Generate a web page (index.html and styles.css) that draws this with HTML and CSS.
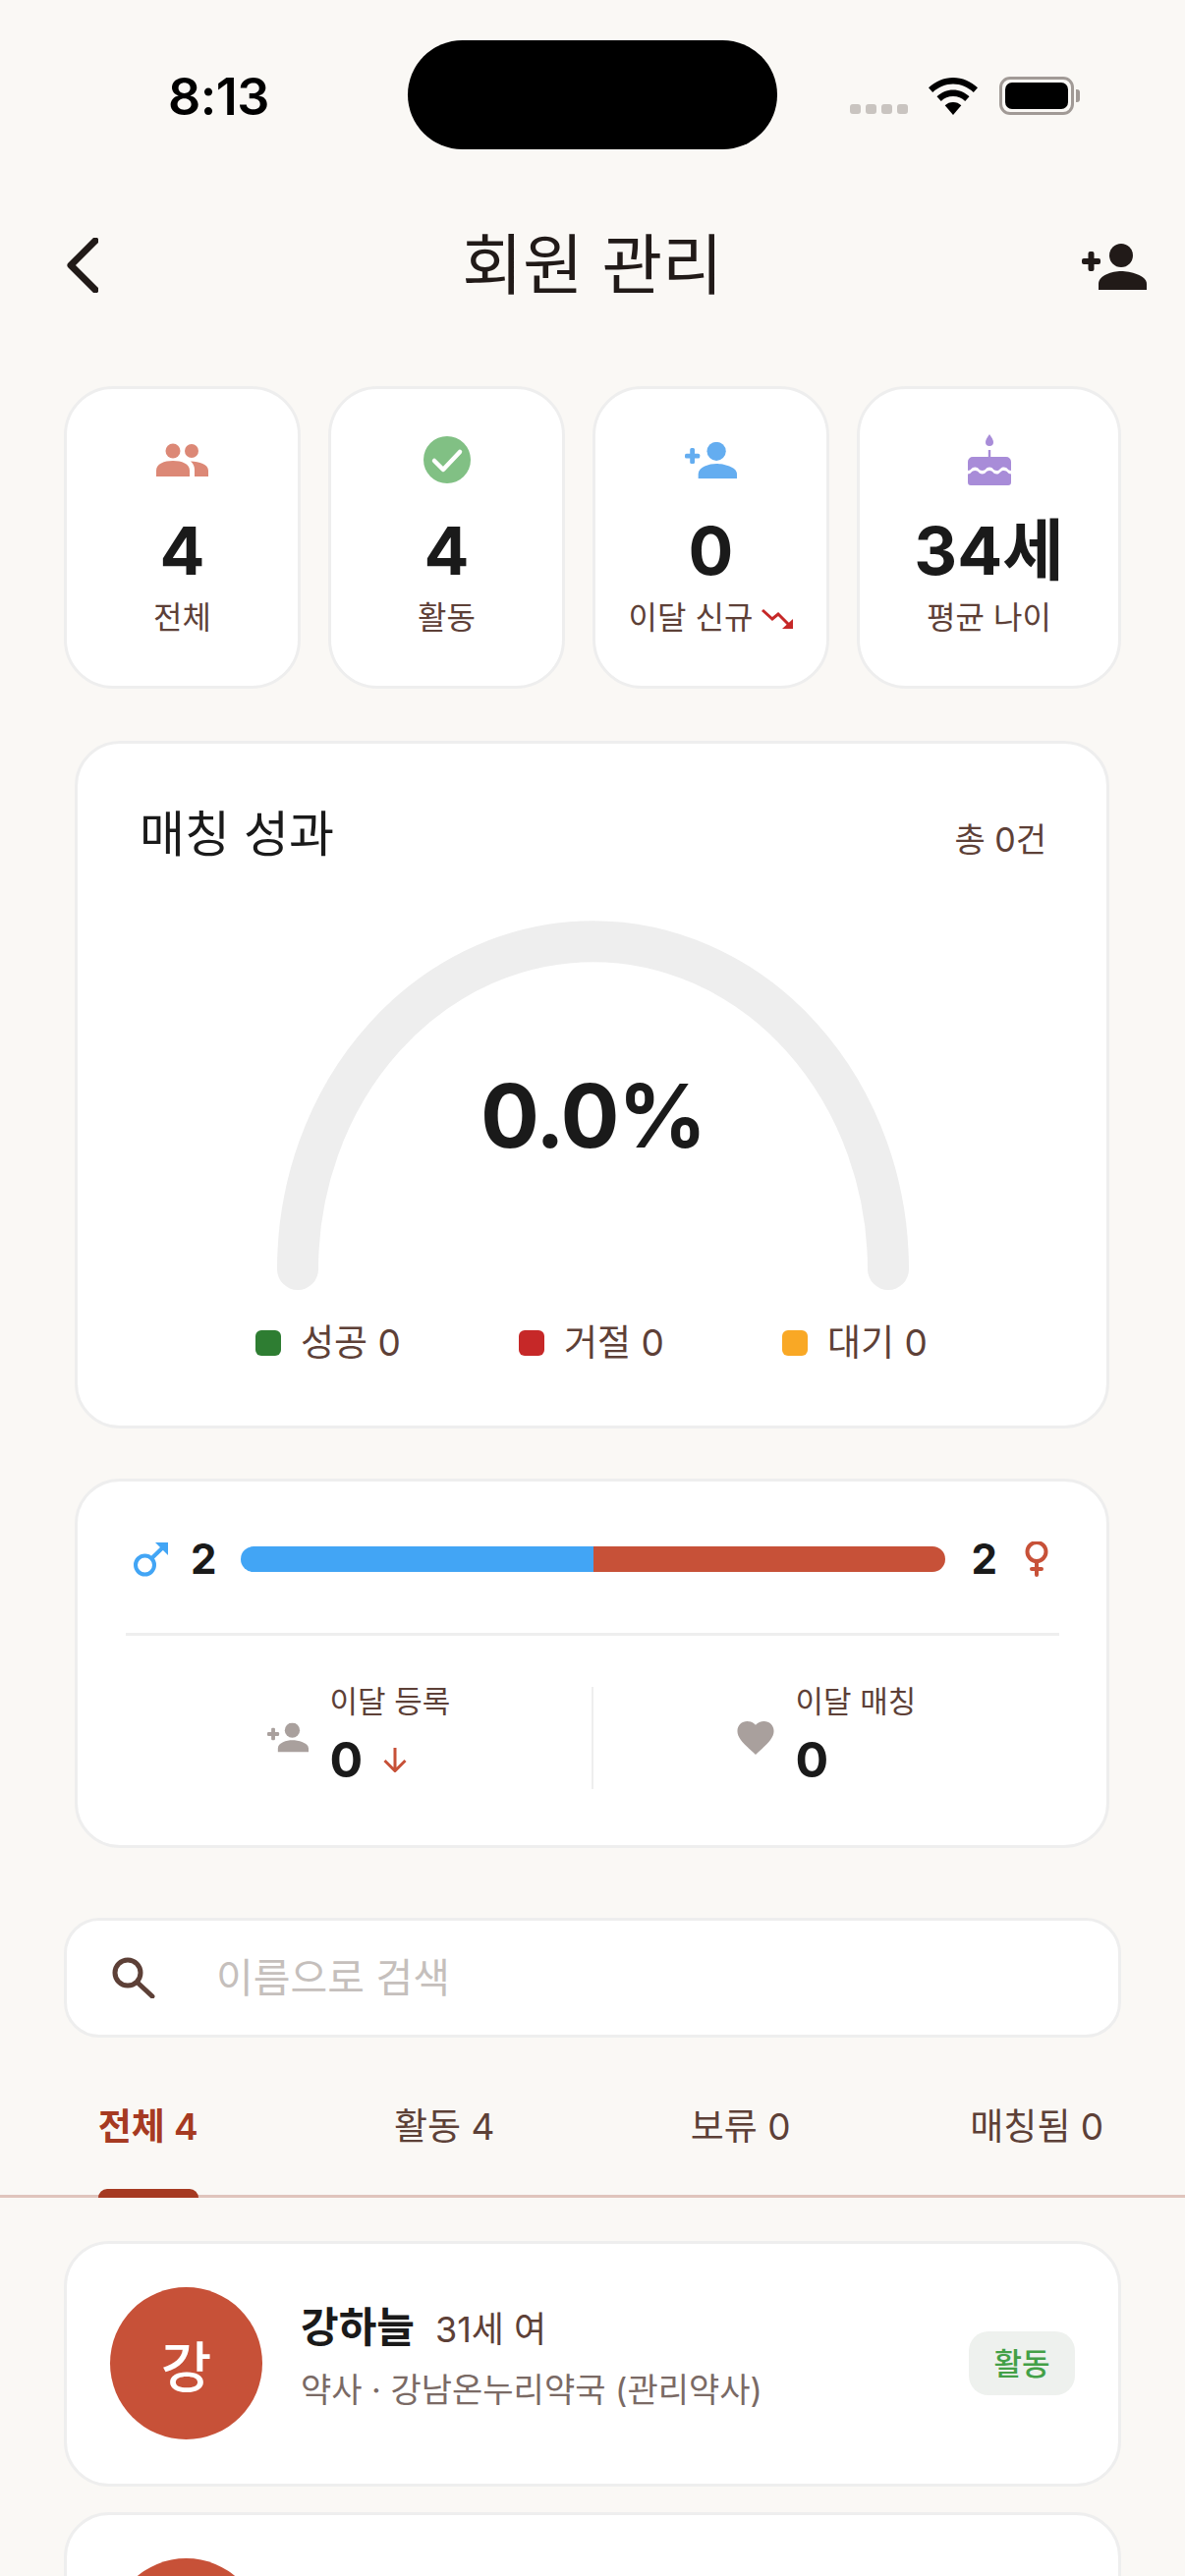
FILE: index.html
```html
<!DOCTYPE html>
<html lang="ko">
<head>
    <meta charset="utf-8" />
    <title>회원 관리</title>
    <link rel="stylesheet" href="styles.css">
</head>
<body>
    <div class="page">
        <div class="statusbar">
            <span class="time">8:13</span>
            <div class="island"></div>
            <div class="status-icons">
                <div class="signal"><i></i><i></i><i></i><i></i></div>
                <svg class="wifi" viewBox="0 0 50 38"><path d="M25 0C15.500 0 7 3.800 0 10.200l4.200 4.700C10 9.500 17.200 6.400 25 6.400s15 3.100 20.800 8.500l4.200-4.700C43 3.800 34.500 0 25 0z"/><path d="M25 12.500c-6.300 0-12 2.500-16.500 6.700l4.300 4.800C16 21 20.300 19.100 25 19.100s9 1.900 12.200 4.900l4.300-4.800C37 15 31.300 12.500 25 12.500z"/><path d="M25 25c-3.200 0-6.200 1.200-8.300 3.300L25 38l8.300-9.700C31.200 26.200 28.200 25 25 25z"/></svg>
                <div class="battery"><div class="battery-fill"></div></div>
            </div>
        </div>

        <div class="topbar">
            <svg class="back" viewBox="0 0 32 56"><path d="M29 3L4 28l25 25"/></svg>
            <h1>회원 관리</h1>
            <svg class="add-top" viewBox="0 0 66 47"><use href="#person-add"/></svg>
        </div>

        <div class="stats">
            <div class="stat">
                <div class="stat-icon">
                    <svg class="i-people" viewBox="0 0 53 34"><circle cx="17" cy="8" r="7.500"/><circle cx="36" cy="8" r="7"/><path d="M0 34v-6c0-7 8-10 17-10s17 3 17 10v6z"/><path d="M35 18.500c9 .5 18 3 18 9.500v6H39v-7c0-3.500-1.500-6.500-4-8.500z"/></svg>
                </div>
                <div class="stat-num">4</div>
                <div class="stat-label">전체</div>
            </div>
            <div class="stat">
                <div class="stat-icon">
                    <svg class="i-check" viewBox="0 0 48 48"><circle cx="24" cy="24" r="24"/><path d="M11 25l9 9 17-18"/></svg>
                </div>
                <div class="stat-num">4</div>
                <div class="stat-label">활동</div>
            </div>
            <div class="stat">
                <div class="stat-icon">
                    <svg class="i-add" viewBox="0 0 66 47"><use href="#person-add"/></svg>
                </div>
                <div class="stat-num">0</div>
                <div class="stat-label">이달 신규 <svg class="i-trend" viewBox="0 0 32 22"><path d="M1 2l10 9 6-5 12 12"/><path class="tip" d="M32 11v10H21z"/></svg></div>
            </div>
            <div class="stat">
                <div class="stat-icon">
                    <svg class="i-cake" viewBox="0 0 44 52"><path d="M22 0c2.500 3.500 4 6 4 8a4 4 0 0 1-8 0c0-2 1.500-4.500 4-8z"/><rect x="20.800" y="16" width="2.400" height="7"/><path d="M0 28a5 5 0 0 1 5-5h34a5 5 0 0 1 5 5v9c-3.500 0-3.500-3.500-7.300-3.500S32.900 37 29.300 37s-3.600-3.500-7.300-3.500S18.300 37 14.700 37s-3.600-3.500-7.400-3.500S3.500 37 0 37z"/><path d="M0 40.500c3.500 0 3.500-3.500 7.300-3.500s3.800 3.500 7.400 3.500S18.300 37 22 37s3.700 3.500 7.300 3.500 3.600-3.500 7.400-3.500 3.800 3.500 7.300 3.500V49a3 3 0 0 1-3 3H3a3 3 0 0 1-3-3z"/></svg>
                </div>
                <div class="stat-num">34세</div>
                <div class="stat-label">평균 나이</div>
            </div>
        </div>

        <div class="card match">
            <div class="match-head">
                <h2>매칭 성과</h2>
                <span class="match-total">총 0건</span>
            </div>
            <div class="gauge">
                <svg viewBox="0 0 643 376"><path d="M21 355A300.500 334 0 0 1 622 355"/></svg>
                <div class="gauge-value">0.0%</div>
            </div>
            <div class="legend">
                <div class="legend-item"><i class="dot green"></i>성공 0</div>
                <div class="legend-item"><i class="dot red"></i>거절 0</div>
                <div class="legend-item"><i class="dot amber"></i>대기 0</div>
            </div>
        </div>

        <div class="card gender">
            <div class="ratio">
                <svg class="i-male" viewBox="0 0 36 36"><circle cx="11.500" cy="24" r="9.500"/><path d="M18 17.500L33 3"/><path class="tip" d="M22 1h13v13z"/></svg>
                <span class="ratio-num">2</span>
                <div class="bar"><div class="bar-male"></div><div class="bar-female"></div></div>
                <span class="ratio-num">2</span>
                <svg class="i-female" viewBox="0 0 24 36"><circle cx="12" cy="10.500" r="9.500"/><path d="M12 20v14M7 28h10"/></svg>
            </div>
            <div class="month">
                <div class="month-col">
                    <svg class="i-month-add" viewBox="0 0 66 47"><use href="#person-add"/></svg>
                    <div>
                        <div class="month-label">이달 등록</div>
                        <div class="month-num">0 <svg class="i-down" viewBox="0 0 26 26"><path d="M13 1v23M2.500 14L13 24.500 23.500 14"/></svg></div>
                    </div>
                </div>
                <div class="month-col">
                    <svg class="i-heart" viewBox="0 0 24 22"><path d="M12 22l-1.700-1.600C4.200 14.800 0 11 0 6.400 0 2.700 2.900 0 6.500 0 8.600 0 10.700 1 12 2.500 13.300 1 15.400 0 17.500 0 21.100 0 24 2.700 24 6.400c0 4.600-4.200 8.400-10.300 14z"/></svg>
                    <div>
                        <div class="month-label">이달 매칭</div>
                        <div class="month-num">0</div>
                    </div>
                </div>
            </div>
        </div>

        <div class="search">
            <svg viewBox="0 0 44 42"><circle cx="16" cy="16" r="13"/><path d="M26 26l15 14"/></svg>
            <span>이름으로 검색</span>
        </div>

        <div class="tabs">
            <div class="tab active"><span>전체 4</span></div>
            <div class="tab"><span>활동 4</span></div>
            <div class="tab"><span>보류 0</span></div>
            <div class="tab"><span>매칭됨 0</span></div>
        </div>

        <div class="list">
            <div class="member">
                <div class="avatar">강</div>
                <div class="member-info">
                    <div class="member-top"><b>강하늘</b> <span>31세 여</span></div>
                    <div class="member-job">약사 · 강남온누리약국 (관리약사)</div>
                </div>
                <span class="badge">활동</span>
            </div>
            <div class="member">
                <div class="avatar"></div>
            </div>
        </div>
    </div>

    <svg class="defs" width="0" height="0">
        <symbol id="person-add" viewBox="0 0 66 47">
            <circle cx="40" cy="12" r="12"/>
            <path d="M17 47v-6c0-9 14-13 23-13s26 4 26 13v6z"/>
            <rect x="0" y="15" width="19" height="6" rx="2"/>
            <rect x="6.500" y="8" width="6" height="20" rx="2"/>
        </symbol>
    </svg>
</body>
</html>
```

FILE: styles.css
```css
* {
    margin: 0;
    padding: 0;
    box-sizing: border-box;
}

body {
    background: #faf8f5;
    font-family: "Inter", "Noto Sans CJK KR", sans-serif;
    color: #1a1a1a;
}

.page {
    width: 1206px;
    height: 2622px;
    overflow: hidden;
}

.defs {
    position: absolute;
}

/* status bar */
.statusbar {
    height: 152px;
    padding-top: 41px;
    display: flex;
    align-items: flex-start;
}

.time {
    width: 415px;
    padding: 32px 0 0 171px;
    font-size: 52px;
    line-height: 52px;
    font-weight: 600;
    letter-spacing: -0.5px;
    color: #000;
}

.island {
    width: 376px;
    height: 111px;
    border-radius: 56px;
    background: #000;
}

.status-icons {
    display: flex;
    align-items: flex-end;
    padding: 37px 0 0 74px;
}

.signal {
    display: flex;
    gap: 5px;
    margin-bottom: 1px;
}

.signal i {
    width: 11px;
    height: 10px;
    border-radius: 3px;
    background: #c9c4c0;
}

.wifi {
    width: 50px;
    height: 38px;
    margin-left: 21px;
}

.battery {
    width: 76px;
    height: 39px;
    margin-left: 22px;
    border: 3px solid #a19a96;
    border-radius: 11px;
    padding: 3px;
    position: relative;
}

.battery::after {
    content: "";
    position: absolute;
    right: -9px;
    top: 10px;
    width: 4px;
    height: 13px;
    border-radius: 0 3px 3px 0;
    background: #a19a96;
}

.battery-fill {
    height: 100%;
    border-radius: 7px;
    background: #000;
}

/* header */
.topbar {
    height: 86px;
    margin-top: 75px;
    padding: 0 39px 0 68px;
    display: flex;
    align-items: center;
    justify-content: space-between;
    position: relative;
}

.topbar h1 {
    position: absolute;
    left: 0;
    right: 0;
    top: 0;
    text-align: center;
    font-size: 67px;
    line-height: 86px;
    font-weight: 400;
    color: #211a18;
}

.back {
    width: 32px;
    height: 56px;
    fill: none;
    stroke: #211a18;
    stroke-width: 7;
    stroke-linecap: round;
    stroke-linejoin: round;
}

.add-top {
    width: 66px;
    height: 47px;
    margin-top: 2px;
    fill: #211a18;
}

/* stat cards */
.stats {
    margin-top: 80px;
    padding: 0 65px;
    display: grid;
    grid-template-columns: 241px 241px 241px 1fr;
    gap: 28px;
}

.stat {
    height: 308px;
    background: #fff;
    border: 3px solid #eeeeee;
    border-radius: 50px;
    display: flex;
    flex-direction: column;
    align-items: center;
}

.stat-icon {
    height: 96px;
    margin-top: 46px;
    display: flex;
    justify-content: center;
    align-items: center;
    padding-bottom: 44px;
}

.i-people {
    width: 53px;
    height: 34px;
    fill: #dc8876;
}

.i-check {
    width: 48px;
    height: 48px;
}

.i-check circle {
    fill: #81c084;
}

.i-check path {
    fill: none;
    stroke: #fff;
    stroke-width: 4.500;
    stroke-linecap: round;
    stroke-linejoin: round;
}

.i-add {
    width: 53px;
    height: 39px;
    fill: #64adf0;
}

.i-cake {
    width: 44px;
    height: 52px;
    fill: #a88cd8;
}

.stat-num {
    height: 70px;
    margin-top: -13px;
    font-size: 68px;
    line-height: 70px;
    font-weight: 700;
    white-space: nowrap;
}

.stat-label {
    margin-top: 13px;
    font-size: 32px;
    line-height: 42px;
    color: #5d4037;
    white-space: nowrap;
}

.i-trend {
    width: 32px;
    height: 22px;
    vertical-align: -1px;
}

.i-trend path {
    fill: none;
    stroke: #c62828;
    stroke-width: 3;
}

.i-trend .tip {
    fill: #c62828;
    stroke: none;
}

/* shared card */
.card {
    margin: 0 77px 0 76px;
    background: #fff;
    border: 3px solid #eeeeee;
    border-radius: 46px;
}

/* match card */
.match {
    margin-top: 53px;
    height: 700px;
    padding: 57px 61px 3px 63px;
}

.match-head {
    display: flex;
    justify-content: space-between;
    align-items: center;
    height: 70px;
}

.match-head h2 {
    font-size: 50px;
    line-height: 70px;
    font-weight: 400;
}

.match-total {
    font-size: 34px;
    padding-top: 6px;
    color: #5d4037;
}

.gauge {
    margin-top: 53px;
    height: 376px;
    position: relative;
}

.gauge svg {
    display: block;
    width: 643px;
    height: 376px;
    margin: 0 auto;
    fill: none;
    stroke: #eeeeee;
    stroke-width: 42;
    stroke-linecap: round;
}

.gauge-value {
    position: absolute;
    left: 0;
    right: 0;
    top: 144px;
    text-align: center;
    font-size: 89px;
    line-height: 110px;
    letter-spacing: -1.500px;
    font-weight: 700;
}

.legend {
    margin-top: 32px;
    padding-left: 118px;
    display: flex;
    gap: 121px;
}

.legend-item {
    width: 147px;
    display: flex;
    align-items: center;
    gap: 20px;
    font-size: 37px;
    line-height: 44px;
    color: #5d4037;
    white-space: nowrap;
}

.dot {
    flex: none;
    width: 26px;
    height: 26px;
    border-radius: 6px;
}

.green {
    background: #2e7d32;
}

.red {
    background: #c62828;
}

.amber {
    background: #f9a825;
}

/* gender card */
.gender {
    margin-top: 51px;
    height: 376px;
    padding: 58px 48px 0 49px;
}

.ratio {
    height: 42px;
    padding: 0 11px 0 8px;
    display: flex;
    align-items: center;
}

.i-male {
    width: 36px;
    height: 36px;
    fill: none;
    stroke: #42a5f5;
    stroke-width: 4;
}

.i-male .tip {
    fill: #42a5f5;
    stroke: none;
}

.i-female {
    width: 24px;
    height: 36px;
    fill: none;
    stroke: #c75138;
    stroke-width: 4;
    stroke-linecap: round;
}

.ratio-num {
    font-size: 42px;
    line-height: 42px;
    font-weight: 700;
    margin: 0 25px 0 22px;
}

.ratio-num:last-of-type {
    margin: 0 28px 0 27px;
}

.bar {
    flex: 1;
    height: 26px;
    border-radius: 13px;
    overflow: hidden;
    display: flex;
}

.bar-male {
    flex: 1;
    background: #42a5f5;
}

.bar-female {
    flex: 1;
    background: #c75138;
}

.month {
    margin-top: 54px;
    border-top: 3px solid #eeeeee;
    padding-top: 52px;
    display: flex;
}

.month-col {
    flex: 1;
    height: 104px;
    display: flex;
    justify-content: center;
    gap: 22px;
}

.month-col:first-child {
    border-right: 2px solid #eeeeee;
}

.i-month-add {
    width: 42px;
    height: 31px;
    margin-top: 36px;
    fill: #a9a09d;
}

.i-heart {
    width: 38px;
    height: 34px;
    margin-top: 35px;
    fill: #a9a09d;
}

.month-label {
    font-size: 31px;
    line-height: 30px;
    color: #5d4037;
}

.month-num {
    margin-top: 16px;
    font-size: 50px;
    line-height: 56px;
    font-weight: 700;
    display: flex;
    align-items: center;
    gap: 20px;
}

.i-down {
    width: 26px;
    height: 26px;
    fill: none;
    stroke: #c75138;
    stroke-width: 3;
}

/* search */
.search {
    margin: 71px 65px 0 65px;
    height: 122px;
    background: #fff;
    border: 3px solid #eeeeee;
    border-radius: 36px;
    padding: 0 0 6px 46px;
    display: flex;
    align-items: center;
    gap: 62px;
}

.search svg {
    flex: none;
    width: 44px;
    height: 42px;
    margin-top: 5px;
    fill: none;
    stroke: #5d4037;
    stroke-width: 5;
    stroke-linecap: round;
}

.search span {
    font-size: 41px;
    color: #c5bfbc;
}

/* tabs */
.tabs {
    margin-top: 53px;
    height: 110px;
    border-bottom: 3px solid #e0c4bc;
    display: grid;
    grid-template-columns: repeat(4, 1fr);
}

.tab {
    display: flex;
    justify-content: center;
    font-size: 37px;
    line-height: 76px;
    color: #5d4037;
}

.tab span {
    height: 107px;
    position: relative;
}

.tab.active {
    color: #a63a22;
    font-weight: 600;
}

.tab.active span::after {
    content: "";
    position: absolute;
    left: 0;
    right: 0;
    bottom: -3px;
    height: 9px;
    border-radius: 9px 9px 0 0;
    background: #a63a22;
}

/* member list */
.list {
    margin: 44px 65px 0 65px;
    display: flex;
    flex-direction: column;
    gap: 26px;
}

.member {
    height: 250px;
    flex: none;
    background: #fff;
    border: 3px solid #eeeeee;
    border-radius: 46px;
    padding: 44px 44px 0 44px;
    display: flex;
    align-items: flex-start;
    gap: 39px;
}

.avatar {
    flex: none;
    width: 155px;
    height: 155px;
    border-radius: 50%;
    background: #c75138;
    color: #fff;
    font-size: 56px;
    font-weight: 500;
    display: flex;
    align-items: center;
    justify-content: center;
}

.member-info {
    flex: 1;
    padding-top: 13px;
}

.member-top {
    display: flex;
    align-items: baseline;
    gap: 21px;
    line-height: 56px;
}

.member-top b {
    font-size: 42px;
    font-weight: 600;
}

.member-top span {
    font-size: 36px;
    color: #5d4037;
}

.member-job {
    margin-top: 10px;
    font-size: 34px;
    line-height: 48px;
    color: #7a6a65;
    white-space: nowrap;
}

.badge {
    margin-top: 45px;
    width: 108px;
    height: 65px;
    border-radius: 20px;
    background: #eef1ee;
    color: #43a047;
    font-size: 31px;
    font-weight: 500;
    line-height: 65px;
    text-align: center;
}
```
